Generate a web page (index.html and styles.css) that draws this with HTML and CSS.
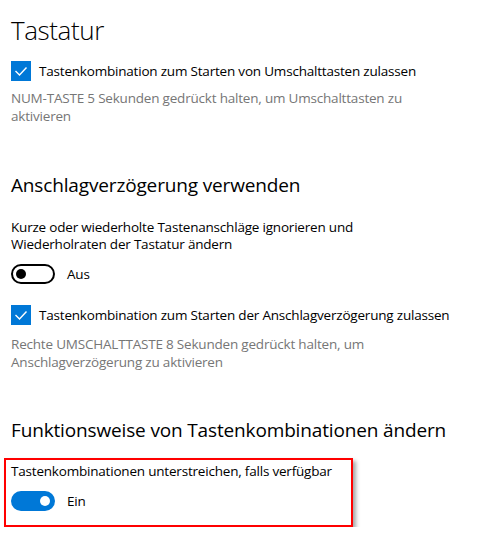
FILE: index.html
```html
<!DOCTYPE html>
<html lang="de">
<head>
<meta charset="utf-8">
<title>Tastatur</title>
<link rel="stylesheet" href="styles.css">
</head>
<body>
<main class="page">
  <h1 class="title">Tastatur</h1>

  <div class="check-row first-check">
    <span class="checkbox"><svg viewBox="0 0 20 20" width="20" height="20"><polyline points="4.5,10 8.5,14 15.5,6.5" fill="none" stroke="#fff" stroke-width="1.4"/></svg></span>
    <span class="label">Tastenkombination zum Starten von Umschalttasten zulassen</span>
  </div>
  <p class="desc">NUM-TASTE 5 Sekunden gedrückt halten, um Umschalttasten zu aktivieren</p>

  <h2 class="subtitle sub-1">Anschlagverzögerung verwenden</h2>
  <p class="text">Kurze oder wiederholte Tastenanschläge ignorieren und Wiederholraten der Tastatur ändern</p>
  <div class="toggle-row">
    <span class="toggle off"><span class="knob"></span></span>
    <span class="toggle-label">Aus</span>
  </div>

  <div class="check-row second-check">
    <span class="checkbox"><svg viewBox="0 0 20 20" width="20" height="20"><polyline points="4.5,10 8.5,14 15.5,6.5" fill="none" stroke="#fff" stroke-width="1.4"/></svg></span>
    <span class="label">Tastenkombination zum Starten der Anschlagverzögerung zulassen</span>
  </div>
  <p class="desc second-desc">Rechte UMSCHALTTASTE 8 Sekunden gedrückt halten, um Anschlagverzögerung zu aktivieren</p>

  <h2 class="subtitle sub-2">Funktionsweise von Tastenkombinationen ändern</h2>
  <div class="highlight">
    <p class="text">Tastenkombinationen unterstreichen, falls verfügbar</p>
    <div class="toggle-row">
      <span class="toggle on"><span class="knob"></span></span>
      <span class="toggle-label">Ein</span>
    </div>
  </div>
</main>
</body>
</html>
```

FILE: styles.css
```css
html, body {
  margin: 0;
  padding: 0;
  background: #fff;
}
body {
  font-family: "Open Sans", "Noto Sans", sans-serif;
  color: #000;
  font-size: 13.5px;
  letter-spacing: -0.2px;
}
.page {
  padding: 12px 0 0 11px;
  width: 470px;
}
.title {
  margin: 0;
  font-size: 26px;
  font-weight: 300;
  letter-spacing: -0.4px;
  line-height: 36px;
}
.check-row {
  display: flex;
  align-items: center;
  gap: 8px;
  height: 20px;
}
.first-check {
  margin-top: 13px;
}
.second-check {
  margin-top: 21px;
}
.checkbox {
  width: 20px;
  height: 20px;
  background: #0078d7;
  display: flex;
  flex: none;
}
.label {
  line-height: 20px;
}
.desc {
  margin: 8px 0 0 0;
  color: #767676;
  line-height: 18px;
  width: 410px;
}
.second-desc {
  margin-top: 10px;
  width: 380px;
}
.text {
  margin: 0;
  line-height: 17px;
  width: 360px;
}
.subtitle {
  margin: 0;
  font-weight: 400;
  font-size: 19px;
  letter-spacing: -0.15px;
  line-height: 26px;
}
.sub-1 {
  margin-top: 47px;
  margin-bottom: 21px;
}
.sub-2 {
  margin-top: 46px;
  margin-bottom: 15px;
}
.toggle-row {
  display: flex;
  align-items: center;
  gap: 12px;
  margin-top: 11px;
  height: 20px;
}
.toggle {
  width: 44px;
  height: 20px;
  box-sizing: border-box;
  border-radius: 10px;
  display: flex;
  align-items: center;
  flex: none;
}
.toggle.off {
  border: 2px solid #000;
  padding-left: 3px;
}
.toggle.on {
  background: #0078d7;
  justify-content: flex-end;
  padding-right: 5px;
}
.knob {
  width: 10px;
  height: 10px;
  border-radius: 50%;
}
.off .knob {
  background: #000;
}
.on .knob {
  background: #fff;
}
.toggle-label {
  line-height: 20px;
}
.highlight {
  margin-left: -7px;
  width: 349px;
  height: 69px;
  box-sizing: border-box;
  border: 2px solid #ff0000;
  padding: 3px 0 0 5px;
  box-shadow: 3px 3px 4px rgba(0, 0, 0, 0.35);
}
.highlight .toggle-row {
  margin-top: 11px;
}
```
